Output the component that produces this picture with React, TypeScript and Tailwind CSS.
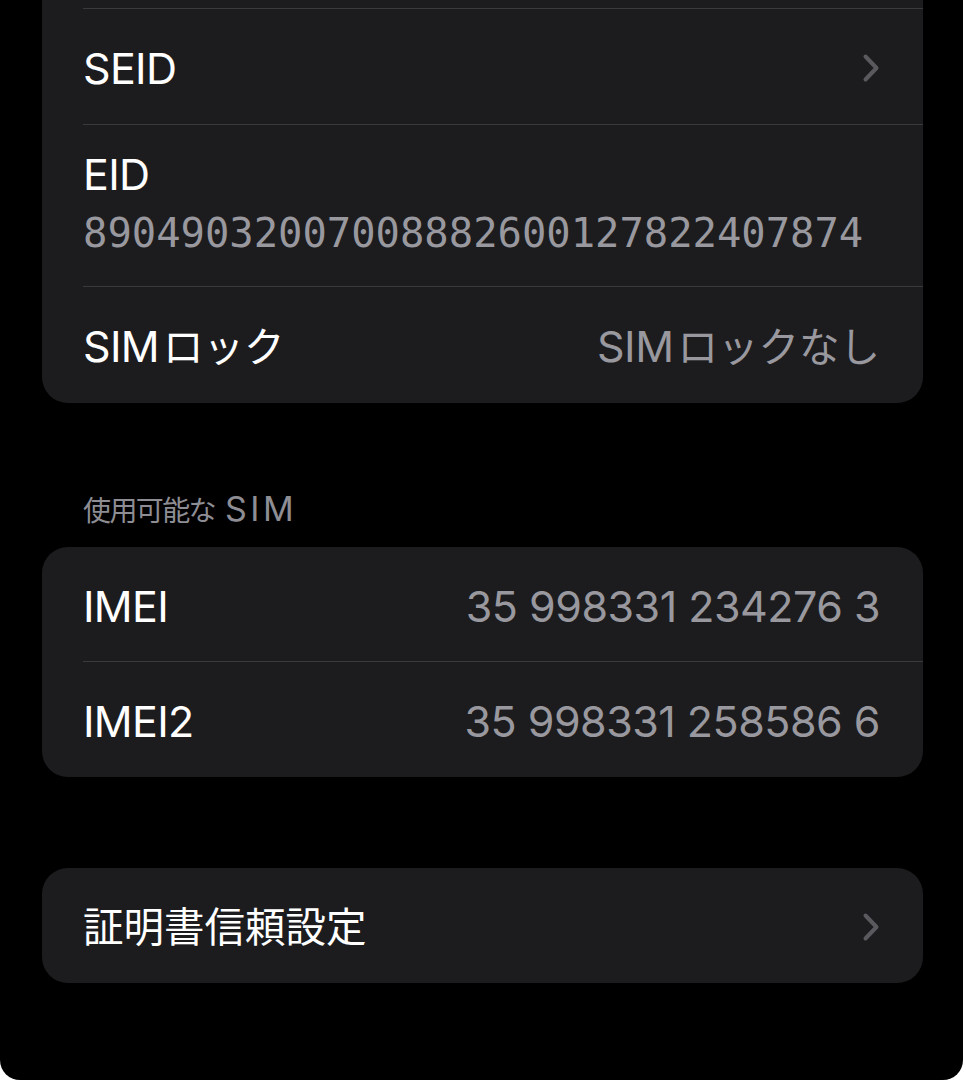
import React from "react";

const sans = "font-['Inter','Noto_Sans_CJK_JP',sans-serif]";

const Chevron = () => (
  <svg width="18" height="30" viewBox="0 0 18 30" fill="none">
    <path
      d="M3.5 3.5 L14.5 15 L3.5 26.5"
      stroke="#5a5a5e"
      strokeWidth="4"
      strokeLinecap="round"
      strokeLinejoin="round"
    />
  </svg>
);

const Separator = () => <div className="ml-[41px] h-px bg-[#3a3a3e]" />;

// Japanese runs sit a little smaller than the latin text
const Jp = ({ children, gap }: { children: React.ReactNode; gap?: boolean }) => (
  <span className={`text-[40.5px] tracking-normal ${gap ? "ml-[4px]" : ""}`}>{children}</span>
);

const Row = ({
  label,
  value,
  chevron,
  h = "h-[115px]",
}: {
  label: React.ReactNode;
  value?: React.ReactNode;
  chevron?: boolean;
  h?: string;
}) => (
  <div className={`flex items-center justify-between pl-[41px] pr-[43px] pt-[3px] ${h}`}>
    <span className="text-[43px] leading-[52px] text-white tracking-[-0.7px]">{label}</span>
    {value && (
      <span className="text-[43px] leading-[52px] text-[#98989e] tracking-[-0.5px]">{value}</span>
    )}
    {chevron && <Chevron />}
  </div>
);

export default function App() {
  return (
    <div className={`w-[966px] h-[1080px] bg-white ${sans}`}>
      <div className="w-[963px] h-[1080px] bg-black rounded-b-[20px] overflow-hidden pl-[42px]">
        {/* top card, scrolled partly out of view */}
        <div className="w-[881px] bg-[#1c1c1e] rounded-b-[26px]">
          <div className="h-[8px]" />
          <Separator />
          <Row label="SEID" chevron />
          <Separator />
          <div className="h-[161px] pl-[41px] pt-[23px]">
            <div className="text-[43px] leading-[52px] text-white tracking-[-0.7px]">EID</div>
            <div className="mt-[9px] text-[40.5px] leading-[48px] text-[#98989e] font-['DejaVu_Sans_Mono',monospace]">
              89049032007008882600127822407874
            </div>
          </div>
          <Separator />
          <Row
            label={
              <>
                SIM<Jp gap>ロック</Jp>
              </>
            }
            value={
              <>
                SIM<Jp gap>ロックなし</Jp>
              </>
            }
            h="h-[116px]"
          />
        </div>

        <div className="mt-[88px] mb-[20px] pl-[41px] flex items-baseline h-[36px] text-[#8d8d93]">
          <span className="text-[28px] leading-[36px] tracking-[-1.6px]">使用可能な</span>
          <span className="ml-[10px] text-[34px] leading-[36px] tracking-[3.5px]">SIM</span>
        </div>

        <div className="w-[881px] bg-[#1c1c1e] rounded-[26px]">
          <Row label="IMEI" value="35 998331 234276 3" h="h-[114px]" />
          <Separator />
          <Row label="IMEI2" value="35 998331 258586 6" />
        </div>

        <div className="mt-[91px] w-[881px] bg-[#1c1c1e] rounded-[26px]">
          <Row label={<Jp>証明書信頼設定</Jp>} chevron />
        </div>
      </div>
    </div>
  );
}
